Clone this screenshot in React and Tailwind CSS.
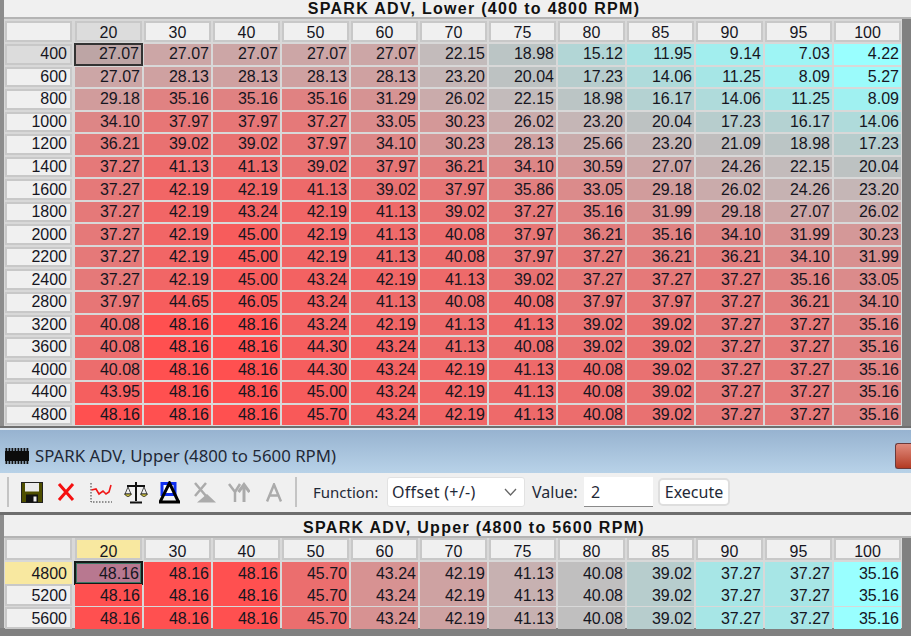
import React from "react";

const COLS = [20, 30, 40, 50, 60, 70, 75, 80, 85, 90, 95, 100];
const LOWER = [
  [400, "27.07 27.07 27.07 27.07 27.07 22.15 18.98 15.12 11.95 9.14 7.03 4.22"],
  [600, "27.07 28.13 28.13 28.13 28.13 23.20 20.04 17.23 14.06 11.25 8.09 5.27"],
  [800, "29.18 35.16 35.16 35.16 31.29 26.02 22.15 18.98 16.17 14.06 11.25 8.09"],
  [1000, "34.10 37.97 37.97 37.27 33.05 30.23 26.02 23.20 20.04 17.23 16.17 14.06"],
  [1200, "36.21 39.02 39.02 37.97 34.10 30.23 28.13 25.66 23.20 21.09 18.98 17.23"],
  [1400, "37.27 41.13 41.13 39.02 37.97 36.21 34.10 30.59 27.07 24.26 22.15 20.04"],
  [1600, "37.27 42.19 42.19 41.13 39.02 37.97 35.86 33.05 29.18 26.02 24.26 23.20"],
  [1800, "37.27 42.19 43.24 42.19 41.13 39.02 37.27 35.16 31.99 29.18 27.07 26.02"],
  [2000, "37.27 42.19 45.00 42.19 41.13 40.08 37.97 36.21 35.16 34.10 31.99 30.23"],
  [2200, "37.27 42.19 45.00 42.19 41.13 40.08 37.97 37.27 36.21 36.21 34.10 31.99"],
  [2400, "37.27 42.19 45.00 43.24 42.19 41.13 39.02 37.27 37.27 37.27 35.16 33.05"],
  [2800, "37.97 44.65 46.05 43.24 41.13 40.08 40.08 37.97 37.97 37.27 36.21 34.10"],
  [3200, "40.08 48.16 48.16 43.24 42.19 41.13 41.13 39.02 39.02 37.27 37.27 35.16"],
  [3600, "40.08 48.16 48.16 44.30 43.24 41.13 40.08 39.02 39.02 37.27 37.27 35.16"],
  [4000, "40.08 48.16 48.16 44.30 43.24 42.19 41.13 40.08 39.02 37.27 37.27 35.16"],
  [4400, "43.95 48.16 48.16 45.00 43.24 42.19 41.13 40.08 39.02 37.27 37.27 35.16"],
  [4800, "48.16 48.16 48.16 45.70 43.24 42.19 41.13 40.08 39.02 37.27 37.27 35.16"],
];
const UPPER = [
  [4800, "48.16 48.16 48.16 45.70 43.24 42.19 41.13 40.08 39.02 37.27 37.27 35.16"],
  [5200, "48.16 48.16 48.16 45.70 43.24 42.19 41.13 40.08 39.02 37.27 37.27 35.16"],
  [5600, "48.16 48.16 48.16 45.70 43.24 42.19 41.13 40.08 39.02 37.27 37.27 35.16"],
];

const STOPS = [
  [0, [153, 255, 255]],
  [0.15, [165, 232, 232]],
  [0.25, [178, 214, 214]],
  [0.33, [186, 198, 198]],
  [0.4, [194, 188, 188]],
  [0.5, [202, 170, 170]],
  [0.65, [218, 140, 140]],
  [0.8, [234, 112, 112]],
  [1, [255, 80, 80]],
];
function heat(v, min, max) {
  const t = (v - min) / (max - min);
  for (let i = 1; i < STOPS.length; i++) {
    if (t <= STOPS[i][0]) {
      const [a, ca] = STOPS[i - 1];
      const [b, cb] = STOPS[i];
      const k = (t - a) / (b - a);
      return `rgb(${ca.map((c, j) => Math.round(c + (cb[j] - c) * k)).join(",")})`;
    }
  }
  return "rgb(255,80,80)";
}

function Table({ title, rows, upper }) {
  const all = rows.flatMap(([, s]) => s.split(" ").map(Number));
  const min = Math.min(...all);
  const max = Math.max(...all);
  const activeBg = upper ? "bg-[#f8e8a0]" : "bg-[#dcdcdc]";
  const textShift = upper ? "pt-[2px]" : "";
  return (
    <div className="flex bg-[#808080] font-['Liberation_Sans',Arial,sans-serif] text-[#16161f]">
      <div className="w-[4px] shrink-0 bg-[#8c8c8c]" />
      <div className="flex-1">
        <div className={`bg-[#f0f0f0] border-b-2 border-[#b4b4b4] text-center text-[16px] font-bold tracking-[1.3px] text-[#111] pl-[33px] ${upper ? "h-[23px] leading-[25px]" : "h-[19px] leading-[18px]"}`}>
          {title}
        </div>
        <div className="w-[898px] bg-[#d8d8d8]">
          <div className={`grid grid-cols-[70px_repeat(12,69px)] ${upper ? "h-[23px] pb-[1px]" : "h-[24px] pt-[2px] pb-[1px]"}`}>
            <div className="w-[67px] h-full ml-[1px] border-2 border-[#c8c8c8] bg-[#f0f0f0]" />
            {COLS.map((c, i) => (
              <div key={c} className="h-full flex justify-center">
                <div className={`w-[67px] h-full border-2 border-[#c8c8c8] flex items-end justify-center text-[16px] ${upper ? "leading-[12px]" : "leading-[15px]"} ${i === 0 ? activeBg : "bg-[#f0f0f0]"}`}>
                  {c}
                </div>
              </div>
            ))}
          </div>
          {rows.map(([rpm, s], r) => (
            <div key={rpm} className={`grid grid-cols-[70px_repeat(12,69px)] py-[1px] ${upper ? "h-[22.4px]" : "h-[22.55px]"}`}>
              <div className={`w-[67px] ml-[1px] border-2 flex items-center justify-end pr-[3px] text-[16px] leading-none ${textShift} ${r === 0 ? (upper ? "bg-[#f8e8a0] border-[#f8e8a0]" : "bg-[#dcdcdc] border-[#c8c8c8]") : "bg-[#f0f0f0] border-[#c8c8c8]"}`}>
                {rpm}
              </div>
              {s.split(" ").map((v, c) => {
                const sel = r === 0 && c === 0;
                return (
                  <div
                    key={c}
                    className={`flex items-center justify-end text-[16px] leading-none ${textShift} ${sel ? `-my-[1px] border-2 pr-[2px] ${upper ? "border-[#141a18] ring-1 ring-inset ring-[#3f7565]" : "border-[#333333]"}` : "mx-[1px] pr-[2px]"}`}
                    style={{ backgroundColor: sel ? (upper ? "#b87890" : "#bda5a5") : heat(Number(v), min, max) }}
                  >
                    {v}
                  </div>
                );
              })}
            </div>
          ))}
        </div>
      </div>
    </div>
  );
}

function ChipIcon() {
  return (
    <svg width="24" height="16" viewBox="0 0 24 16" aria-hidden="true">
      <rect x="0" y="3" width="24" height="10" fill="#0c0c0c" />
      {[1, 4, 7, 10, 13, 16, 19, 22].map((x) => (
        <g key={x}>
          <rect x={x - 0.5} y="0" width="1.8" height="3" fill="#111" />
          <rect x={x - 0.5} y="13" width="1.8" height="3" fill="#111" />
        </g>
      ))}
    </svg>
  );
}

function Toolbar() {
  return (
    <div className="h-[42px] bg-[#f0f0f0] flex items-center border-b-[3px] border-[#6e6e6e] font-['Noto_Sans',sans-serif] text-[16px] text-[#1f2937]">
      <div className="w-[2px] h-[30px] bg-[#c4c4c4] ml-[7px] shrink-0" />
      <svg className="ml-[12px] shrink-0" width="22" height="21" viewBox="0 0 22 21" aria-hidden="true">
        <rect x="0.5" y="0.5" width="21" height="20" fill="#4f4f00" stroke="#222" />
        <rect x="4" y="1" width="14" height="8.5" fill="#ececec" />
        <rect x="5" y="12.5" width="12" height="8" fill="#111" />
        <rect x="12.5" y="14.5" width="3" height="5" fill="#eee" />
      </svg>
      <svg className="ml-[14px] shrink-0" width="18" height="20" viewBox="0 0 18 20" aria-hidden="true">
        <path d="M2 2 L16 18 M16 2 L2 18" stroke="#f51010" strokeWidth="3" fill="none" />
      </svg>
      <svg className="ml-[15px] shrink-0" width="22" height="21" viewBox="0 0 22 21" aria-hidden="true">
        <path d="M1 1 V20 H22" stroke="#333" strokeWidth="1" strokeDasharray="1.5 1.5" fill="none" />
        <path d="M1.5 8 L6 7 L9 12 L13 9 L16 12 L19 10 L21 3" stroke="#f01818" strokeWidth="1.6" fill="none" />
      </svg>
      <svg className="ml-[12px] shrink-0" width="24" height="23" viewBox="0 0 24 23" aria-hidden="true">
        <path d="M12 1 V20 M6 21.5 H18 M3 5 H21" stroke="#111" strokeWidth="2" fill="none" />
        <path d="M4 6 L1 13 H7 Z M20 6 L17 13 H23 Z" fill="none" stroke="#222" strokeWidth="0.8" />
        <path d="M0.5 13 Q4 18 7.5 13 Z M16.5 13 Q20 18 23.5 13 Z" fill="#e6d84a" stroke="#111" strokeWidth="0.8" />
      </svg>
      <svg className="ml-[11px] shrink-0" width="21" height="23" viewBox="0 0 21 23" aria-hidden="true">
        <rect x="3" y="2.5" width="13" height="11" fill="#fff" stroke="#1030f0" strokeWidth="3" />
        <path d="M1 21 L10.5 2 L19.5 21 M0 21 H21" stroke="#000" strokeWidth="3" fill="none" />
      </svg>
      <svg className="ml-[13px] shrink-0" width="23" height="21" viewBox="0 0 23 21" aria-hidden="true">
        <path d="M2 1 L13 14 M13 1 L2 14" stroke="#ababab" strokeWidth="2.5" fill="none" />
        <path d="M4 20.5 H23 L14 12 Z" fill="#ababab" />
      </svg>
      <svg className="ml-[12px] shrink-0" width="22" height="21" viewBox="0 0 22 21" aria-hidden="true">
        <path d="M1 2 L7 10 V20 M12 2 L7 10" stroke="#ababab" strokeWidth="2.5" fill="none" />
        <path d="M16 20 V4 M10.5 10 L16 2.5 L21.5 10" stroke="#ababab" strokeWidth="3" fill="none" />
      </svg>
      <svg className="ml-[16px] shrink-0" width="16" height="19" viewBox="0 0 16 19" aria-hidden="true">
        <path d="M1 18.5 L8 1.5 L15 18.5 M3.5 12.5 H12.5" stroke="#ababab" strokeWidth="2.5" fill="none" />
      </svg>
      <div className="w-[2px] h-[30px] bg-[#c4c4c4] ml-[13px] shrink-0" />
      <span className="ml-[16px] w-[67px] text-[15px] shrink-0">Function:</span>
      <div className="ml-[7px] w-[138px] h-[30px] bg-white rounded-[3px] border border-[#e2e2e2] flex items-center justify-between pl-[4px] pr-[7px] shrink-0">
        <span className="tracking-[0.3px]">Offset (+/-)</span>
        <svg width="13" height="8" viewBox="0 0 13 8" aria-hidden="true">
          <path d="M1 1 L6.5 7 L12 1" stroke="#666" strokeWidth="1.3" fill="none" />
        </svg>
      </div>
      <span className="ml-[7px] w-[45px] shrink-0">Value:</span>
      <div className="ml-[7px] w-[69px] h-[30px] bg-white border-b border-[#8a8a8a] pl-[7px] flex items-center shrink-0">2</div>
      <div className="ml-[5px] w-[72px] h-[28px] bg-white rounded-[5px] border-2 border-[#dedede] flex items-center justify-center shrink-0">Execute</div>
    </div>
  );
}

export default function App() {
  return (
    <div className="w-[911px] h-[636px] overflow-hidden bg-[#808080]">
      <Table title="SPARK ADV, Lower (400 to 4800 RPM)" rows={LOWER} />
      <div className="h-[1.65px] bg-[#6e6e6e]" />
      <div className="h-[2px] bg-[#dfe7ef]" />
      <div className="h-[43px] bg-gradient-to-b from-[#97b3d0] to-[#b8d2e8] flex font-['Noto_Sans',sans-serif] text-[16.8px] text-[#1f2937]">
        <div className="self-start mt-[18px] ml-[5px] mr-[6px] flex"><ChipIcon /></div>
        <span className="self-start mt-[14px] leading-[24px]">SPARK ADV, Upper (4800 to 5600 RPM)</span>
        <div className="ml-auto self-start mt-[13px] w-[16px] h-[26px] bg-gradient-to-b from-[#e08a7c] to-[#b33a22] border border-[#6b3a3a] rounded-l-[3px] border-r-0" />
      </div>
      <Toolbar />
      <Table title="SPARK ADV, Upper (4800 to 5600 RPM)" rows={UPPER} upper />
    </div>
  );
}
